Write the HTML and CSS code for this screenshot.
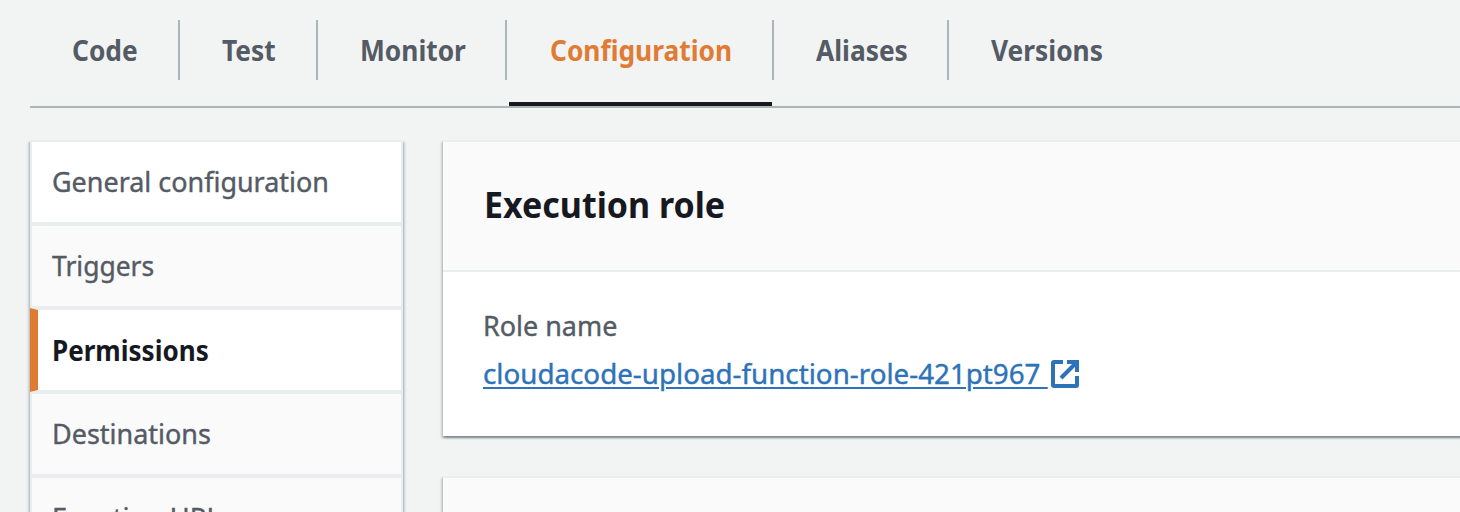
FILE: index.html
```html
<!DOCTYPE html>
<html lang="en">
<head>
<meta charset="utf-8">
<title>Configuration</title>
<link rel="stylesheet" href="styles.css">
</head>
<body>
<nav class="tabs">
  <a class="tab tab-code"><span>Code</span></a>
  <a class="tab tab-test"><span>Test</span></a>
  <a class="tab tab-monitor"><span>Monitor</span></a>
  <a class="tab tab-configuration active"><span>Configuration</span></a>
  <a class="tab tab-aliases"><span>Aliases</span></a>
  <a class="tab tab-versions"><span>Versions</span></a>
</nav>
<div class="layout">
  <aside class="sidebar">
    <a class="item first"><span class="general">General configuration</span></a>
    <a class="item"><span class="triggers">Triggers</span></a>
    <a class="item current"><span class="permissions">Permissions</span></a>
    <a class="item"><span class="destinations">Destinations</span></a>
    <a class="item"><span class="url">Function URL</span></a>
  </aside>
  <main class="content">
    <section class="card">
      <header class="card-header"><h2><span class="title">Execution role</span></h2></header>
      <div class="card-body">
        <div class="label"><span class="role-label">Role name</span></div>
        <a class="link"><span class="role-link">cloudacode-upload-function-role-421pt967&nbsp;</span><svg class="external" viewBox="0 0 28 28" width="28" height="28"><path d="M12 2H3Q2 2 2 3V25Q2 26 3 26H25Q26 26 26 25V16M16 2h10v10M26 2L10 18" fill="none" stroke="currentColor" stroke-width="4"/></svg></a>
      </div>
    </section>
    <section class="card"><header class="card-header"></header></section>
  </main>
</div>
</body>
</html>
```
FILE: styles.css
```css
* { box-sizing: border-box; }
body {
  margin: 0;
  height: 512px;
  overflow: hidden;
  background: #f2f4f4;
  color: #545b64;
  font: 28px/40px "Noto Sans", sans-serif;
}
span { display: inline-block; white-space: nowrap; transform-origin: 0 50%; }
.tabs {
  display: flex;
  height: 108px;
  margin-left: 30px;
  padding-top: 20px;
  border-bottom: 2px solid #aab7b8;
}
.tab {
  height: 60px;
  padding: 10px 0 0 42px;
  border-right: 2px solid #aab7b8;
  font-weight: 700;
}
.tab span { transform: scaleX(.94); }
.tab-code { width: 150px; }
.tab-test { width: 138px; }
.tab-monitor { width: 189px; }
.tab-configuration { width: 267px; }
.tab-aliases { width: 175px; }
.tab-versions { width: 200px; border-right: 0; }
.active { position: relative; padding-left: 43px; color: #e07b34; }
.active::after {
  content: "";
  position: absolute;
  left: 2px;
  right: 0;
  top: 82px;
  height: 4px;
  background: #16191f;
}
.layout { display: flex; gap: 40px; height: 404px; padding: 32px 0 0 30px; }
.sidebar, .card {
  box-shadow: 0 2px 2px rgba(0, 28, 36, .3), 2px 2px 2px rgba(0, 28, 36, .15), -2px 2px 2px rgba(0, 28, 36, .15);
}
.sidebar { width: 373px; flex: none; }
.item {
  display: block;
  height: 84px;
  padding: 19px 20px;
  border: 2px solid #eaeded;
  background: #fafafa;
}
.item span, .role-label, .role-link { -webkit-text-stroke: .4px currentColor; }
.item .general { transform: scaleX(.962); }
.item .triggers { transform: scaleX(.945); }
.item .permissions { transform: scaleX(.93); -webkit-text-stroke: 0; }
.item .destinations { transform: scaleX(.963); }
.item .url { transform: scaleX(.97); }
.first { background: #fff; }
.current {
  padding: 20px 14px;
  border-left: 8px solid #e07b34;
  background: #fff;
  color: #16191f;
  font-weight: 700;
}
.content { display: flex; flex: 1; flex-direction: column; gap: 40px; margin-right: -10px; }
.card { flex: none; background: #fff; border-top: 2px solid #eaeded; }
.card-header { height: 130px; padding: 40px 41px; border-bottom: 2px solid #eaeded; background: #fafafa; }
h2 { margin: 0; color: #16191f; font-size: 36px; line-height: 46px; }
.title { transform: scaleX(.944); }
.card-body { height: 164px; padding: 33px 40px; }
.label { height: 48px; }
.role-label { transform: scaleX(.962); }
.link { display: flex; color: #2e73b8; }
.role-link {
  width: 564px;
  text-decoration: underline;
  text-decoration-thickness: 2px;
  text-underline-offset: 3px;
  transform: scaleX(.991);
}
.external { flex: none; margin: 7px 0 0 4px; }
```
